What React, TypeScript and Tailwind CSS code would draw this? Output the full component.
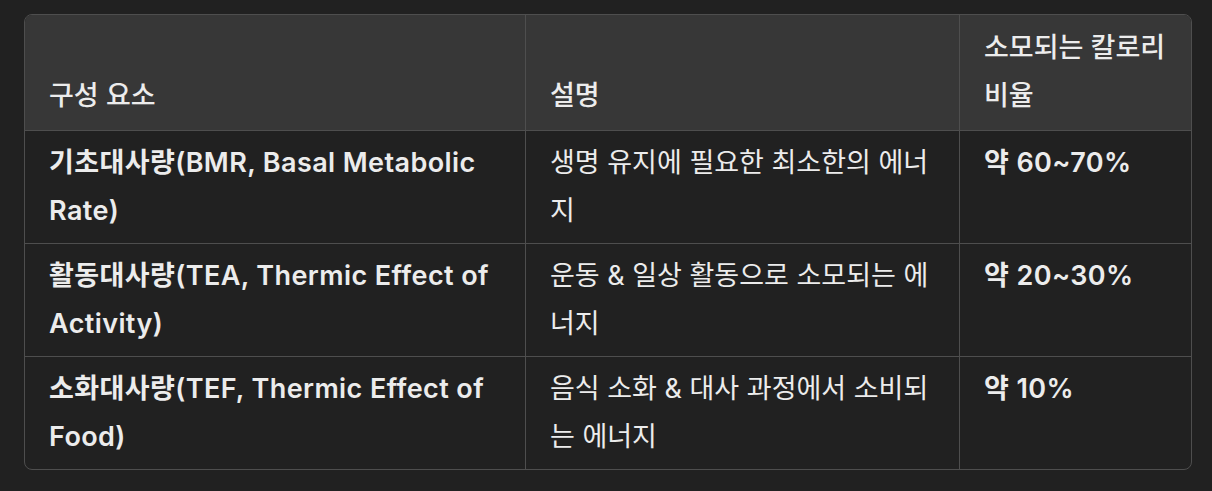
const rows = [
  {
    name: '기초대사량(BMR, Basal Metabolic Rate)',
    desc: '생명 유지에 필요한 최소한의 에너지',
    ratio: '약 60~70%',
  },
  {
    name: '활동대사량(TEA, Thermic Effect of Activity)',
    desc: '운동 & 일상 활동으로 소모되는 에너지',
    ratio: '약 20~30%',
  },
  {
    name: '소화대사량(TEF, Thermic Effect of Food)',
    desc: '음식 소화 & 대사 과정에서 소비되는 에너지',
    ratio: '약 10%',
  },
]

export default function App() {
  return (
    <div className="h-[491px] w-[1212px] bg-[#212121] px-6 pt-[14px] font-['Inter','Noto_Sans_CJK_KR',sans-serif] text-[27px] leading-[48px] text-[#ececec]">
      <div className="w-[1168px] overflow-hidden rounded-lg border border-[#4e4e4e]">
        <table className="w-full table-fixed border-separate border-spacing-0">
          <colgroup>
            <col className="w-[500px]" />
            <col className="w-[434px]" />
            <col className="w-[232px]" />
          </colgroup>
          <thead className="bg-[#373737]">
            <tr>
              <th className="px-6 pt-[9px] pb-[10px] text-left align-bottom font-medium">구성 요소</th>
              <th className="border-l border-[#4e4e4e] px-6 pt-[9px] pb-[10px] text-left align-bottom font-medium">설명</th>
              <th className="border-l border-[#4e4e4e] px-6 pt-[9px] pb-[10px] text-left align-bottom font-medium">
                소모되는 칼로리 비율
              </th>
            </tr>
          </thead>
          <tbody>
            {rows.map((r) => (
              <tr key={r.ratio}>
                <td className="border-t border-[#4e4e4e] px-6 py-2 align-top font-semibold tracking-[0.4px]">{r.name}</td>
                <td className="border-t border-l border-[#4e4e4e] px-6 py-2 align-top">{r.desc}</td>
                <td className="border-t border-l border-[#4e4e4e] px-6 py-2 align-top font-semibold tracking-[0.4px]">
                  {r.ratio}
                </td>
              </tr>
            ))}
          </tbody>
        </table>
      </div>
    </div>
  )
}
